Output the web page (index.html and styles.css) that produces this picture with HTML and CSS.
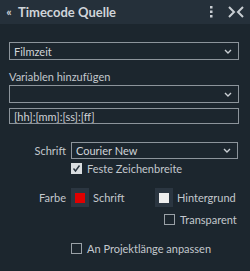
FILE: index.html
```html
<!DOCTYPE html>
<html>
<head>
    <title>Timecode Quelle</title>
    <meta name="viewport" content="width=device-width, initial-scale=1">
    <link rel="stylesheet" href="styles.css">
</head>
<body>
    <div class="panel">
        <div class="header">
            <span class="back">&laquo;</span>
            <span class="title">Timecode Quelle</span>
            <span class="dots">
                <svg width="4" height="12" viewBox="0 0 4 12"><rect x="1" y="0" width="2.5" height="2.5" fill="#c9ced3"/><rect x="1" y="4.5" width="2.5" height="2.5" fill="#c9ced3"/><rect x="1" y="9" width="2.5" height="2.5" fill="#c9ced3"/></svg>
            </span>
            <span class="close">
                <svg width="16" height="12" viewBox="0 0 16 12"><path d="M1 1 L6 6 L1 11 M15 1 L10 6 L15 11" stroke="#c9ced3" stroke-width="2" fill="none"/></svg>
            </span>
        </div>

        <div class="content">
            <div class="field select">
                <span>Filmzeit</span>
                <svg class="chev" width="8" height="5" viewBox="0 0 8 5"><path d="M1 1 L4 4 L7 1" stroke="#c9ced3" stroke-width="1.4" fill="none"/></svg>
            </div>

            <div class="label">Variablen hinzufügen</div>
            <div class="field select">
                <span></span>
                <svg class="chev" width="8" height="5" viewBox="0 0 8 5"><path d="M1 1 L4 4 L7 1" stroke="#c9ced3" stroke-width="1.4" fill="none"/></svg>
            </div>
            <div class="field input">[hh]:[mm]:[ss]:[ff]</div>

            <div class="row font-row">
                <span class="row-label">Schrift</span>
                <div class="field select wide">
                    <span>Courier New</span>
                    <svg class="chev" width="8" height="5" viewBox="0 0 8 5"><path d="M1 1 L4 4 L7 1" stroke="#c9ced3" stroke-width="1.4" fill="none"/></svg>
                </div>
            </div>
            <div class="row check-row">
                <span class="row-label"></span>
                <span class="check checked">
                    <svg width="9" height="9" viewBox="0 0 9 9"><path d="M1.5 4.5 L3.5 7 L7.5 1.5" stroke="#2b3640" stroke-width="1.4" fill="none"/></svg>
                </span>
                <span class="check-text">Feste Zeichenbreite</span>
            </div>

            <div class="row color-row">
                <span class="row-label">Farbe</span>
                <div class="color-pick">
                    <span class="swatch"><span class="chip red"></span></span>
                    <span class="swatch-text">Schrift</span>
                </div>
                <div class="color-pick">
                    <span class="swatch"><span class="chip white"></span></span>
                    <span class="swatch-text">Hintergrund</span>
                </div>
            </div>
            <div class="row transp-row">
                <span class="check"></span>
                <span class="check-text">Transparent</span>
            </div>

            <div class="row fit-row">
                <span class="row-label"></span>
                <span class="check"></span>
                <span class="check-text">An Projektlänge anpassen</span>
            </div>
        </div>
    </div>
</body>
</html>
```

FILE: styles.css
```css
body {
    margin: 0;
    background-color: #1c262e;
    font-family: Lato, "Noto Sans", sans-serif;
    font-size: 11px;
    color: #c3c8cd;
}

.panel {
    width: 250px;
    height: 271px;
    overflow: hidden;
}

.header {
    display: flex;
    align-items: center;
    height: 24px;
    background-color: #25303a;
}

.back {
    width: 18px;
    text-align: center;
    font-size: 12px;
    font-weight: bold;
    color: #c9ced3;
    padding-bottom: 2px;
}

.title {
    flex: 1;
    font-size: 13px;
    font-weight: bold;
    color: #cfd4d9;
}

.dots {
    display: flex;
    margin-right: 15px;
}

.close {
    display: flex;
    margin-right: 6px;
}

.content {
    padding: 18px 11px 0 9px;
}

.field {
    display: flex;
    align-items: center;
    box-sizing: border-box;
    height: 18px;
    border: 1px solid #8c949b;
    padding: 0 6px 0 4px;
    color: #d0d4d8;
}

.select span {
    flex: 1;
}

.chev {
    display: block;
}

.label {
    margin-top: 10px;
    height: 14px;
    line-height: 14px;
    margin-bottom: 1px;
}

.input {
    margin-top: 5px;
    height: 16px;
}

.row {
    display: flex;
    align-items: center;
    line-height: 12px;
}

.row-label {
    width: 57px;
    text-align: right;
    padding-right: 5px;
    flex-shrink: 0;
}

.font-row {
    margin-top: 18px;
    height: 17px;
}

.wide {
    width: 167px;
    height: 17px;
}

.check {
    display: flex;
    align-items: center;
    justify-content: center;
    box-sizing: border-box;
    width: 11px;
    height: 11px;
    border: 1px solid #9aa1a7;
    flex-shrink: 0;
}

.checked {
    background-color: #d9dde0;
    border-color: #d9dde0;
}

.check-text {
    margin-left: 5px;
}

.check-row {
    margin-top: 4px;
    height: 11px;
}

.color-row {
    margin-top: 14px;
    height: 19px;
}

.color-pick {
    display: flex;
    align-items: center;
    width: 86px;
}

.swatch {
    display: flex;
    align-items: center;
    justify-content: center;
    width: 18px;
    height: 19px;
    background-color: #2b3641;
}

.chip {
    width: 10px;
    height: 10px;
}

.red {
    background-color: #e00000;
}

.white {
    background-color: #eeeeee;
}

.swatch-text {
    margin-left: 4px;
}

.transp-row {
    margin-top: 7px;
    height: 11px;
    padding-left: 155px;
}

.fit-row {
    margin-top: 18px;
    height: 11px;
}
```
